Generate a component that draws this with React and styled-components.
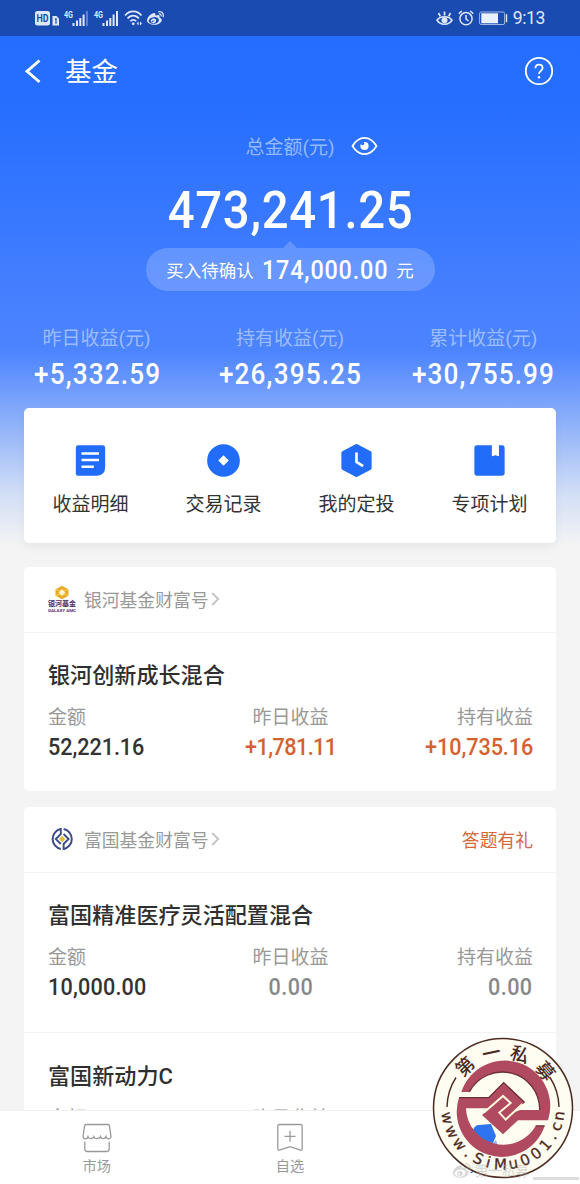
import React from 'react';
import styled, { createGlobalStyle } from 'styled-components';
import { FaWeibo } from 'react-icons/fa';

const GlobalStyle = createGlobalStyle`
  * {
    box-sizing: border-box;
  }
  body {
    margin: 0;
    font-family: Roboto, 'Noto Sans CJK SC', sans-serif;
    color: #333;
  }
  svg {
    display: block;
    flex-shrink: 0;
    overflow: visible;
  }
`;

const Screen = styled.div`
  position: relative;
  display: flex;
  flex-direction: column;
  width: 580px;
  height: 1184px;
  overflow: hidden;
  background: linear-gradient(
    #246dff 0,
    #256eff 100px,
    #3a79ff 230px,
    #4881ff 310px,
    #4c84ff 350px,
    #749ffb 395px,
    #a3bff8 445px,
    #d3dff6 495px,
    #f4f4f4 546px
  );
`;

const StatusBar = styled.div`
  display: flex;
  justify-content: space-between;
  align-items: center;
  height: 36px;
  flex-shrink: 0;
  padding: 0 35px;
  background: #194bb0;
  color: #dfe8fb;
`;

const StatusGroup = styled.div`
  display: flex;
  align-items: center;
  gap: ${props => props.$gap}px;
`;

const Clock = styled.span`
  font-size: 17.6px;
  letter-spacing: -0.4px;
  line-height: 36px;
`;

const Content = styled.div`
  flex: 1;
  min-height: 0;
  overflow: hidden;
`;

const NavBar = styled.div`
  display: flex;
  align-items: center;
  height: 70px;
  padding: 0 26px 0 24px;
  color: white;
`;

const NavTitle = styled.div`
  flex: 1;
  margin-left: 23px;
  padding-top: 1px;
  font-size: 26.5px;
  line-height: 36px;
`;

const TotalLabel = styled.div`
  display: flex;
  justify-content: center;
  align-items: center;
  gap: 16px;
  height: 30px;
  margin: 25px 0 0 43px;
  padding-bottom: 1px;
  font-size: 19px;
  color: #95b9ff;
`;

/* figures are drawn narrow, with open spacing */
const Num = styled.span`
  display: inline-block;
  vertical-align: top;
  font-family: Roboto, sans-serif;
  font-weight: 500;
  font-size: ${props => props.$size}px;
  letter-spacing: ${props => props.$spacing || 0}px;
  transform: scaleX(0.9);
  transform-origin: ${props => props.$origin || 'center'};
`;

const Total = styled.div`
  height: 60px;
  margin-top: 19px;
  padding-left: 1px;
  line-height: 60px;
  text-align: center;
  color: white;
`;

const Pending = styled.div`
  position: relative;
  display: flex;
  justify-content: center;
  align-items: center;
  gap: 1px;
  width: 289px;
  height: 43px;
  margin: 8px auto 0;
  border-radius: 22px;
  background: rgba(255, 255, 255, 0.2);
  font-size: 17.5px;
  color: white;

  &::before {
    content: '';
    position: absolute;
    left: 50%;
    top: -7px;
    margin-left: -7px;
    border: 7px solid transparent;
    border-top: 0;
    border-bottom-color: rgba(255, 255, 255, 0.2);
  }
`;

const Stats = styled.div`
  display: grid;
  grid-template-columns: repeat(3, 1fr);
  margin-top: 33px;
  text-align: center;
`;

const StatLabel = styled.div`
  font-size: 19px;
  line-height: 30px;
  color: #9bbcff;
`;

const StatValue = styled.div`
  padding-left: 1px;
  line-height: 40px;
  color: white;
`;

const Card = styled.div`
  margin: ${props => props.$top}px 24px 0;
  border-radius: 5px;
  background: white;
`;

const QuickActions = styled(Card)`
  display: grid;
  grid-template-columns: repeat(4, 1fr);
  height: 135px;
  box-shadow: 0 5px 10px rgba(0, 0, 0, 0.05);
`;

const Action = styled.div`
  display: flex;
  flex-direction: column;
  align-items: center;
  gap: 13px;
  padding-top: 35px;
  font-size: 19px;
  line-height: 28px;
`;

const CardHeader = styled.div`
  display: flex;
  align-items: center;
  height: 66px;
  padding: 0 23px 1px 24px;
  border-bottom: 1px solid #f2f2f2;
  font-size: 17.8px;
  color: #999;
`;

const BrandName = styled.div`
  margin: 0 3px 0 8px;
`;

const Promo = styled.div`
  margin-left: auto;
  color: #d3693a;
`;

const Fund = styled.div`
  padding: 27px 23px 29px 24px;

  & + & {
    border-top: 1px solid #f2f2f2;
    padding-top: 28px;
  }

  &:not(:last-child) {
    padding-bottom: 30px;
  }
`;

const FundName = styled.div`
  font-size: 22.1px;
  line-height: 30px;
  font-weight: 500;
  color: #2f2f2f;
`;

const FundFigures = styled.div`
  display: grid;
  grid-template-columns: repeat(3, 1fr);
  margin-top: 16px;
`;

const Figure = styled.div`
  text-align: ${props => props.$align};
`;

const FigureLabel = styled.div`
  font-size: 19px;
  line-height: 24px;
  color: #999;
`;

const FigureValue = styled.div`
  margin-top: 2px;
  line-height: 30px;
  color: ${props => props.$color};
`;

const TabBar = styled.div`
  display: grid;
  grid-template-columns: repeat(3, 1fr);
  height: 74px;
  flex-shrink: 0;
  border-top: 1px solid #f0f0f0;
  background: white;
`;

const Tab = styled.div`
  display: flex;
  flex-direction: column;
  align-items: center;
  gap: 3px;
  padding-top: 12px;
  font-size: 14.2px;
  line-height: 20px;
  color: ${props => (props.$active ? '#1f6cf5' : '#999')};
`;

const Watermark = styled.div`
  position: absolute;
  left: 453px;
  bottom: 4px;
  display: flex;
  align-items: center;
  gap: 4px;
  font-size: 13.5px;
  line-height: 18px;
  white-space: nowrap;
  color: rgba(176, 176, 176, 0.5);

  &::after {
    content: '';
    width: 46px;
    height: 3px;
    background: rgba(200, 200, 200, 0.6);
    align-self: flex-end;
  }
`;

const Stamp = styled.svg`
  position: absolute;
  left: 428px;
  bottom: 1px;
`;

const Signal = ({ weak }) => (
  <svg width="26" height="15" viewBox="0 0 26 15">
    <text x="0" y="6.8" fontSize="9.5" fontWeight="700" fontFamily="Roboto" fill="#dfe8fb" textLength="9" lengthAdjust="spacingAndGlyphs">4G</text>
    <g fill="#dfe8fb">
      <rect x="8.5" y="12" width="2" height="3" />
      <rect x="12" y="9.5" width="2" height="5.5" />
      <rect x="15.3" y="7" width="2" height="8" />
      <rect x="18.6" y="3.5" width="2" height="11.5" />
      <rect x="22" y="0" width="2" height="15" opacity={weak ? 0.35 : 1} />
    </g>
  </svg>
);

const HdIcon = () => (
  <svg width="25" height="15" viewBox="0 0 25 15">
    <rect width="15" height="14.5" rx="2.5" fill="#dfe8fb" />
    <text x="1.5" y="11.2" fontSize="10.5" fontWeight="700" fontFamily="Roboto" fill="#194bb0" textLength="12" lengthAdjust="spacingAndGlyphs">HD</text>
    <path d="M17.5 5h4l2.5 2.5V14.5h-6.5z" fill="#dfe8fb" />
    <path d="M20 8.3l1-.6v5" stroke="#194bb0" strokeWidth="1.2" fill="none" />
  </svg>
);

const WifiIcon = () => (
  <svg width="19" height="16" viewBox="0 0 19 16" fill="none" stroke="#dfe8fb" strokeWidth="1.7">
    <path d="M1 5.5C5.5 0 13 0 17.5 5.5M3.6 8.5c3-3.8 8.3-3.8 11.3 0M6.3 11.3c1.7-2 4.2-2 5.9 0" />
    <circle cx="9.2" cy="13.8" r="1.4" fill="#dfe8fb" stroke="none" />
    <path d="M14.6 11.5L12.6 13.5l2 2zM16 11.5l2 2-2 2z" fill="#dfe8fb" stroke="none" />
  </svg>
);

const EyeCareIcon = () => (
  <svg width="17" height="15" viewBox="0 0 17 15" fill="none" stroke="#dfe8fb" strokeWidth="1.7">
    <path d="M1 9.2C4 4.6 13 4.6 16 9.2 13 14.6 4 14.6 1 9.2z" />
    <circle cx="8.5" cy="9.2" r="3" fill="#dfe8fb" stroke="none" />
    <path d="M8.5 4.5V.6M4.3 5.3L2.5 2M12.7 5.3L14.5 2" />
  </svg>
);

const AlarmIcon = () => (
  <svg width="16" height="16" viewBox="0 0 16 16" fill="none" stroke="#dfe8fb" strokeWidth="1.5">
    <circle cx="8" cy="8.7" r="6.1" />
    <path d="M8 5v4l2.5 2M.8 3.6L3.8 1M15.2 3.6L12.2 1" />
  </svg>
);

const BatteryIcon = () => (
  <svg width="29" height="15" viewBox="0 0 29 15">
    <rect x=".6" y="1" width="25" height="12.5" rx="1.5" fill="none" stroke="#9fb7e6" strokeWidth="1" />
    <rect x="2.3" y="2.3" width="16.7" height="10" fill="#e9f0ff" />
    <rect x="26.8" y="3.2" width="1.4" height="8" fill="#dfe8fb" />
  </svg>
);

const BackIcon = () => (
  <svg width="18" height="26" viewBox="0 0 18 26" fill="none" stroke="white" strokeWidth="2.9">
    <path d="M15.5 2.5L3 13.3l12.5 10.7" />
  </svg>
);

const HelpIcon = () => (
  <svg width="30" height="30" viewBox="0 0 30 30" fill="none" stroke="white" strokeWidth="1.8">
    <circle cx="15" cy="15" r="13.2" />
    <path d="M11.4 12.2c0-5 7.2-4.7 7.2-.3 0 2.9-3.6 3-3.6 6.1" />
    <circle cx="15" cy="21.3" r="1.2" fill="white" stroke="none" />
  </svg>
);

const EyeIcon = () => (
  <svg width="27" height="20" viewBox="0 0 27 20">
    <path d="M1.5 10C8-.9 19-.9 25.5 10 19 20.9 8 20.9 1.5 10z" fill="none" stroke="white" strokeWidth="1.7" />
    <circle cx="13.5" cy="10" r="4.1" fill="white" />
    <circle cx="11.5" cy="7.5" r="1.8" fill="#2f74ff" />
  </svg>
);

const ChevronIcon = () => (
  <svg width="9" height="14" viewBox="0 0 9 14" fill="none" stroke="#c6c6c6" strokeWidth="2">
    <path d="M1.2 1l6 6-6 6" />
  </svg>
);

const actionIcons = {
  detail: (
    <>
      <path d="M5 2h26q2.5 0 2.500 2.500V25q0 9-8.500 9H4.500q-2 0-2-2V4.500q0-2.500 2.500-2.500z" fill="#216cf8" />
      <path d="M8.500 10.500h18.500M8.500 17.500h18.500M8.500 24.500h13" stroke="white" strokeWidth="2.600" />
    </>
  ),
  record: (
    <>
      <circle cx="18" cy="18" r="17.300" fill="#216cf8" />
      <path d="M18 13l5 5-5 5-5-5z" fill="white" stroke="white" strokeLinejoin="round" />
    </>
  ),
  plan: (
    <>
      <path d="M18 2.500l14 7.500v16L18 33.500 4 26V10z" fill="#216cf8" stroke="#216cf8" strokeWidth="4" strokeLinejoin="round" />
      <path d="M18 9.500v10l7 4.500" fill="none" stroke="white" strokeWidth="2.800" />
    </>
  ),
  book: (
    <>
      <rect x="2" y="2" width="32" height="32" rx="2.500" fill="#216cf8" />
      <path d="M20.500 1h7.500v12.500l-3.750-1-3.750 1z" fill="white" />
    </>
  )
};

const ActionIcon = ({ name }) => (
  <svg width="35" height="35" viewBox="-.5 -.5 37 37">{actionIcons[name]}</svg>
);

const GalaxyLogo = () => (
  <svg width="28" height="28" viewBox="0 0 28 28">
    <path d="M14 .8l6.500 3.500v6.400L14 14.200 7.500 10.700V4.300z" fill="#e5ac25" />
    <path d="M14 4.100l3.400 3.400-3.400 3.400-3.400-3.400z" fill="#fff6d2" />
    <path d="M8 4.500l4 1.500M20 4.500l-4 1.500M8 10.500l4-1.500M20 10.500l-4-1.500" stroke="#f7d774" strokeWidth=".8" />
    <text x="0" y="21.300" fontSize="7" fontWeight="700" fontFamily="'Noto Sans CJK SC'" fill="#553070" textLength="28">银河基金</text>
    <text x="0" y="26.500" fontSize="4" fontWeight="700" fontFamily="Roboto" fill="#553070" textLength="28" lengthAdjust="spacingAndGlyphs">GALAXY AMC</text>
  </svg>
);

const FullgoalLogo = () => (
  <svg width="28" height="28" viewBox="0 0 28 28" fill="none" stroke="#3e4c86" strokeWidth="2">
    <path d="M12.800 4A10.200 10.200 0 0 0 12.800 24M15.600 4A10.200 10.200 0 0 1 15.600 24" />
    <path d="M12.800 3v6l-5 5 5 5M15.600 25v-6l5-5-5-5" strokeWidth="1.900" />
    <path d="M14.200 10.800l3.200 3.200-3.200 3.200-3.200-3.200z" fill="#e0bf3c" stroke="none" />
  </svg>
);

const MarketIcon = () => (
  <svg width="30" height="30" viewBox="0 0 30 30" fill="none" stroke="#999" strokeWidth="1.300">
    <path d="M4 1.500h22q1.200 0 1.400 1.200L29 13.500c-.3 3-4.300 3-5 .2-.8 2.600-4.800 2.600-5.600 0-.8 2.600-5.600 2.600-6.600 0-.8 2.600-4.800 2.600-5.800 0-.8 2.800-4.700 2.800-5-.2L2.600 2.700Q2.800 1.500 4 1.500z" />
    <path d="M2.800 18.800V26q0 2.500 2.500 2.500h19.400q2.500 0 2.500-2.500v-7.200" />
  </svg>
);

const WatchlistIcon = () => (
  <svg width="30" height="30" viewBox="0 0 30 30" fill="none" stroke="#999" strokeWidth="1.300">
    <path d="M4.500 1.500h21q1.700 0 1.700 1.700v22.600q0 1.800-1.700 1.300l-9-3q-1.500-.5-3 0l-9 3q-1.700.5-1.700-1.300V3.200q0-1.700 1.700-1.700z" />
    <path d="M15 7.800v11M9.500 13.300h11" />
  </svg>
);

const HoldingIcon = () => (
  <svg width="30" height="30" viewBox="0 0 30 30" fill="#1f6cf5">
    <path d="M5 4h17l4 14H5z" />
    <path d="M5 21h21v4H5z" opacity=".5" />
  </svg>
);

// angle is measured clockwise from the top of the ring
const stampTop = [['第', -42.5], ['一', -12], ['私', 17.5], ['募', 49]];
// reading order along the bottom
const stampBottom = [
  ['w', 80], ['w', 65], ['w', 50.5], ['.', 38], ['S', 26], ['i', 15], ['M', 2.5],
  ['u', -10.5], ['0', -23], ['0', -36], ['1', -49], ['.', -60], ['c', -71], ['n', -82]
];

const CompanyStamp = () => (
  <Stamp width="150" height="150" viewBox="-75 -75 150 150">
    <circle r="69.500" fill="#fffdf0" fillOpacity=".93" stroke="#4c2a20" strokeWidth="1.500" />
    <path d="M-56 -1A56 56 0 0 1 -47 -30.500M56 -1A56 56 0 0 0 47 -30.500" fill="none" stroke="#4c2a20" strokeWidth="1.400" />
    <path d="M-30 22q2-5 6-5l12-1 5 12-3 7-14-2-7-5z" fill="#2e73ef" />
    <path d="M-28 33L-12 37-7 32 -5 38-10 42-20 40z" fill="#91b6f5" />
    <g transform="translate(0 .6) scale(.3333) translate(-145 -148)">
      <g fill="#b04a60">
        <path d="M20 98A135 135 0 0 1 280 183H190L145 225 82 167 145 108 170 130 148 151 158 167 196 152H255A112 112 0 0 0 44 98z" />
        <path d="M13 115H102L147 70 210 130 152 183 132 162 168 130 145 108 102 147H34A112 112 0 0 0 243 200H270A135 135 0 0 1 13 115z" />
      </g>
      <path
        d="M44 98A112 112 0 0 1 255 152M13 115H102L147 70 210 130M243 200H270"
        fill="none"
        stroke="#6d2f3c"
        strokeWidth="4"
      />
      <path d="M88 160L145 110 168 131 134 160 153 181 203 134" fill="none" stroke="#fff6dc" strokeWidth="6" />
    </g>
    {stampTop.map(([char, angle]) => (
      <text
        key={char}
        transform={`rotate(${angle}) translate(0 -49.500)`}
        textAnchor="middle"
        fontSize="18.500"
        fontWeight="500"
        fontFamily="'Noto Sans CJK SC', sans-serif"
        fill="#4c2a20"
      >
        {char}
      </text>
    ))}
    {stampBottom.map(([char, angle], i) => (
      <text
        key={i}
        transform={`rotate(${angle}) translate(0 61.500)`}
        textAnchor="middle"
        fontSize="15"
        fontFamily="'DejaVu Sans', sans-serif"
        fill="#4c2a20"
        stroke="#4c2a20"
        strokeWidth=".3"
      >
        {char}
      </text>
    ))}
  </Stamp>
);

const stats = [
  { label: '昨日收益(元)', value: '+5,332.59' },
  { label: '持有收益(元)', value: '+26,395.25' },
  { label: '累计收益(元)', value: '+30,755.99' }
];

const actions = [
  { icon: 'detail', label: '收益明细' },
  { icon: 'record', label: '交易记录' },
  { icon: 'plan', label: '我的定投' },
  { icon: 'book', label: '专项计划' }
];

const brands = [
  {
    name: '银河基金财富号',
    logo: <GalaxyLogo />,
    funds: [
      { name: '银河创新成长混合', amount: '52,221.16', daily: '+1,781.11', holding: '+10,735.16' }
    ]
  },
  {
    name: '富国基金财富号',
    logo: <FullgoalLogo />,
    promo: '答题有礼',
    funds: [
      { name: '富国精准医疗灵活配置混合', amount: '10,000.00', daily: '0.00', holding: '0.00' },
      { name: '富国新动力C', amount: '10,000.00', daily: '0.00', holding: '0.00' }
    ]
  }
];

const gainColor = (value) => (value.startsWith('+') ? '#d4622f' : '#888');

const figureSpacing = (value) => 0.5 - 0.28 * (value.match(/1/g) || []).length;

const FundFigure = ({ label, value, align, color }) => (
  <Figure $align={align}>
    <FigureLabel>{label}</FigureLabel>
    <FigureValue $color={color}>
      <Num $size={24} $spacing={figureSpacing(value)} $origin={align}>{value}</Num>
    </FigureValue>
  </Figure>
);

export default function App() {
  return (
    <Screen>
      <GlobalStyle />
      <StatusBar>
        <StatusGroup $gap={4}>
          <HdIcon />
          <Signal weak />
          <Signal />
          <WifiIcon />
          <FaWeibo size={17} />
        </StatusGroup>
        <StatusGroup $gap={5}>
          <EyeCareIcon />
          <AlarmIcon />
          <BatteryIcon />
          <Clock>9:13</Clock>
        </StatusGroup>
      </StatusBar>

      <Content>
        <NavBar>
          <BackIcon />
          <NavTitle>基金</NavTitle>
          <HelpIcon />
        </NavBar>

        <TotalLabel>
          总金额(元)
          <EyeIcon />
        </TotalLabel>
        <Total>
          <Num $size={52.5} $spacing={0.8}>473,241.25</Num>
        </Total>
        <Pending>
          买入待确认 <Num $size={26} $spacing={0.9}>174,000.00</Num> 元
        </Pending>

        <Stats>
          {stats.map(stat => (
            <div key={stat.label}>
              <StatLabel>{stat.label}</StatLabel>
              <StatValue>
                <Num $size={29} $spacing={1.3}>{stat.value}</Num>
              </StatValue>
            </div>
          ))}
        </Stats>

        <QuickActions $top={14}>
          {actions.map(action => (
            <Action key={action.icon}>
              <ActionIcon name={action.icon} />
              {action.label}
            </Action>
          ))}
        </QuickActions>

        {brands.map((brand, idx) => (
          <Card key={brand.name} $top={idx === 0 ? 24 : 16}>
            <CardHeader>
              {brand.logo}
              <BrandName>{brand.name}</BrandName>
              <ChevronIcon />
              {brand.promo && <Promo>{brand.promo}</Promo>}
            </CardHeader>
            {brand.funds.map(fund => (
              <Fund key={fund.name}>
                <FundName>{fund.name}</FundName>
                <FundFigures>
                  <FundFigure label="金额" value={fund.amount} align="left" color="#333" />
                  <FundFigure label="昨日收益" value={fund.daily} align="center" color={gainColor(fund.daily)} />
                  <FundFigure label="持有收益" value={fund.holding} align="right" color={gainColor(fund.holding)} />
                </FundFigures>
              </Fund>
            ))}
          </Card>
        ))}
      </Content>

      <TabBar>
        <Tab>
          <MarketIcon />
          市场
        </Tab>
        <Tab>
          <WatchlistIcon />
          自选
        </Tab>
        <Tab $active>
          <HoldingIcon />
          持有
        </Tab>
      </TabBar>

      <CompanyStamp />
      <Watermark>
        <FaWeibo size={18} />
        第一私募
      </Watermark>
    </Screen>
  );
}
